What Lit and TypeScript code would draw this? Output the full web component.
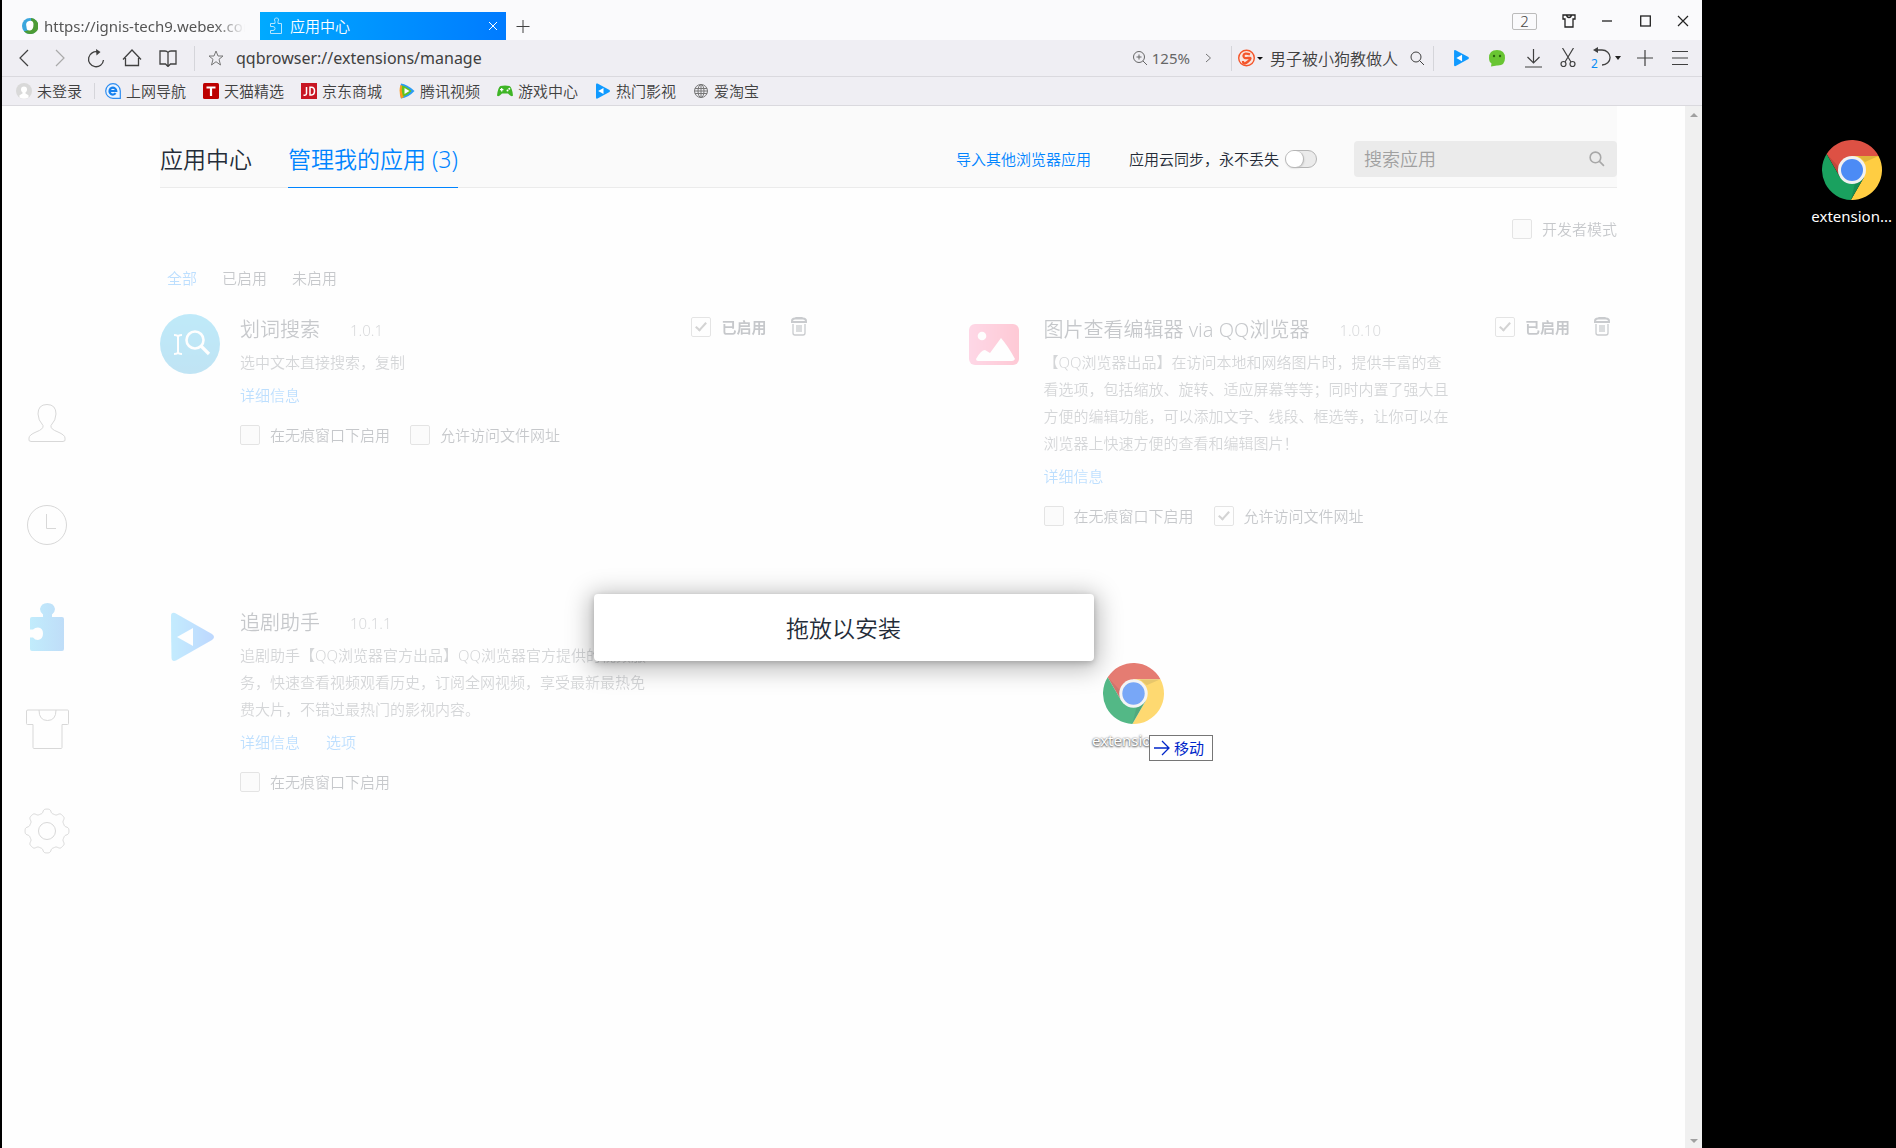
import { LitElement, html, css, svg, nothing } from "lit";
import { customElement, property } from "lit/decorators.js";

/* ---------- icons ---------- */

const chromeIcon = svg`
  <path fill="#dd5144" d="M4.61 14.02A30 30 0 0 1 56.53 16H30V30L17.88 37Z"/>
  <path fill="#ffcd42" d="M56.53 16A30 30 0 0 1 28.86 59.98L42.12 37 30 30V16Z"/>
  <path fill="#1aa15f" d="M28.86 59.98A30 30 0 0 1 4.61 14.02L17.88 37 30 30 42.12 37Z"/>
  <path fill="#000" opacity=".12" d="M36 16H56.53L43 22Z"/>
  <path fill="#000" opacity=".12" d="M4.61 14.02L17.88 37 17 27Z"/>
  <path fill="#000" opacity=".12" d="M28.86 59.98L42.12 37 33 43Z"/>
  <circle cx="30" cy="30" r="14" fill="#f1f1f1"/>
  <circle cx="30" cy="30" r="11" fill="#4c8bf5"/>`;

const gearPath = (() => {
  const points: string[] = [];
  for (let i = 0; i < 240; i++) {
    const a = (i / 240) * Math.PI * 2;
    const r = 20 + 2 * Math.tanh(2 * Math.cos(8 * a));
    points.push(`${(23 + r * Math.sin(a)).toFixed(2)} ${(23 - r * Math.cos(a)).toFixed(2)}`);
  }
  return `M${points.join("L")}Z`;
})();

const searchIcon = svg`<circle cx="7" cy="7" r="5" /><path d="M10.5 10.5L15 15"/>`;
const shirtPath = "M3 1H42.500Q43.500 1 43.500 2V14.500Q43.500 15.500 42.500 15.500H37V38.500Q37 39.500 36 39.500H9Q8 39.500 8 38.500V15.500H2.500Q1.500 15.500 1.500 14.500V2Q1.500 1 3 1";

const playIcon = svg`<path fill="#109aff" d="M1 1.500Q1 0 2.500.6L14.500 7Q15.500 8 14.500 9L2.500 15.600Q1 16 1 14.500Z"/><path fill="#fff" d="M3.200 8L8.500 5V11Z"/>`;

const trashIcon = svg`
  <path d="M2 5Q2 2.500 5 2.500H13Q16 2.500 16 5V6H2ZM6 2.500Q6 1 9 1T12 2.500" fill="none" stroke="#2f3742" stroke-width="2"/>
  <path d="M3 8V17Q3 19 5 19H13Q15 19 15 17V8M7 9V16M9 9V16M11 9V16" fill="none" stroke="#2f3742" stroke-width="1.300"/>`;

const bookmarkIcons: Record<string, unknown> = {
  login: svg`<circle cx="8" cy="8" r="8" fill="#d9d9d9"/><circle cx="8" cy="6.500" r="3" fill="#fff"/><path fill="#fff" d="M6.500 8H9.500V10.500L12.500 12.200V14.500Q8 17 3.500 14.500V12.200L6.500 10.500Z"/>`,
  e: svg`<path d="M8 .7A7.300 7.300 0 0 0 8 15.300H15.300V8A7.300 7.300 0 0 0 8 .7Z" fill="#e8f3ff" stroke="#2d8cf0" stroke-width="1.200"/><path d="M4.500 8H11.300A3.400 3.400 0 1 0 10.600 10.200" fill="none" stroke="#1580ee" stroke-width="2.200"/>`,
  t: svg`<rect width="16" height="16" rx="1.500" fill="#bd0000"/><path d="M3.500 4.500H12.500M8 4.500V13" stroke="#fff" stroke-width="2.200"/>`,
  jd: svg`<rect width="16" height="16" fill="#c81623"/><path d="M5.500 4V10.500Q5.500 12.200 3.800 12.200H2.500M9 4.200H10.500Q13.500 4.200 13.500 8T10.500 12H9Z" fill="none" stroke="#fff" stroke-width="1.500"/>`,
  tencent: svg`<path d="M2 .5Q8 1 15.500 8 9 15 2 15.500 0 8 2 .5Z" fill="#2a9cf5"/><path d="M1.500 2Q-.5 8 2 15.500L5 14 4 3Z" fill="#ff9a1a"/><path d="M3 2.500Q8 3.500 12.500 8 8 12.500 4 13.500 2 8 3 2.500Z" fill="#63c31e"/><path d="M5.500 5L10.500 8 5.500 11Z" fill="#fff"/>`,
  game: svg`<path d="M3.500 3Q8 2 12.500 3 15 4 16 12.500 14.500 14.500 11 10.500H5Q1.500 14.500 0 12.500 1 4 3.500 3Z" fill="#3fb526"/><path d="M3 6.700H6.400M4.700 5V8.400" stroke="#fff" stroke-width="1.200"/><circle cx="10.500" cy="7.500" r="1" fill="#fff"/><circle cx="12.300" cy="5.700" r="1" fill="#fff"/>`,
  play: playIcon,
  globe: svg`<g fill="none" stroke="#777" stroke-width="1"><circle cx="8" cy="8" r="6.500"/><ellipse cx="8" cy="8" rx="3" ry="6.500"/><path d="M8 1.500V14.500M2 5.500H14M2 10.500H14M1.500 8H14.500"/></g>`,
};

const appIcons: Record<string, unknown> = {
  word: svg`
    <defs><linearGradient id="word" x2="0" y2="1"><stop stop-color="#06b0ec"/><stop offset="1" stop-color="#0a98d8"/></linearGradient></defs>
    <circle cx="30" cy="30" r="30" fill="url(#word)"/>
    <path d="M14 21Q18 21 18 23 18 21 22 21M14 40Q18 40 18 38 18 40 22 40M18 22V39" fill="none" stroke="#fff" stroke-width="2"/>
    <circle cx="35" cy="26" r="8.500" fill="none" stroke="#fff" stroke-width="2.600"/><path d="M41 32L49 40" stroke="#fff" stroke-width="3.200"/>`,
  image: svg`
    <defs><linearGradient id="image"><stop stop-color="#ff68a2"/><stop offset="1" stop-color="#ff305f"/></linearGradient></defs>
    <rect x="5" y="10" width="50" height="41" rx="6" fill="url(#image)"/><circle cx="18" cy="22" r="4.300" fill="#fff"/>
    <path fill="#fff" d="M12 45Q17 36 21 36L26 39 37 24Q44 32 51 45 50 47 48 47H14Q12 47 12 45Z"/>`,
  play: svg`
    <defs><linearGradient id="play"><stop stop-color="#1ab8ff"/><stop offset="1" stop-color="#0068ff"/></linearGradient></defs>
    <path fill="url(#play)" d="M11 9Q11 5 15 6L52 27Q56 30 52 33L16 53.500Q12 55 11.500 51Q11 30 11 9Z"/><path fill="#fff" d="M17 30L33 21V39Z"/>`,
};

/* ---------- data ---------- */

interface AppItem {
  id: string;
  icon: string;
  name: string;
  version: string;
  text: string;
  links: string[];
  options: { label: string; on: boolean }[];
  manage: boolean;
}

const apps: AppItem[] = [
  {
    id: "word", icon: "word", name: "划词搜索", version: "1.0.1", text: "选中文本直接搜索，复制", links: ["详细信息"], manage: true,
    options: [{ label: "在无痕窗口下启用", on: false }, { label: "允许访问文件网址", on: false }],
  },
  {
    id: "image", icon: "image", name: "图片查看编辑器 via QQ浏览器", version: "1.0.10",
    text: "【QQ浏览器出品】在访问本地和网络图片时，提供丰富的查看选项，包括缩放、旋转、适应屏幕等等；同时内置了强大且方便的编辑功能，可以添加文字、线段、框选等，让你可以在浏览器上快速方便的查看和编辑图片！",
    links: ["详细信息"], manage: true,
    options: [{ label: "在无痕窗口下启用", on: false }, { label: "允许访问文件网址", on: true }],
  },
  {
    id: "series", icon: "play", name: "追剧助手", version: "10.1.1",
    text: "追剧助手【QQ浏览器官方出品】QQ浏览器官方提供的视频服务，快速查看视频观看历史，订阅全网视频，享受最新最热免费大片，不错过最热门的影视内容。",
    links: ["详细信息", "选项"], manage: false,
    options: [{ label: "在无痕窗口下启用", on: false }],
  },
];

const bookmarks = [
  ["e", "上网导航"], ["t", "天猫精选"], ["jd", "京东商城"], ["tencent", "腾讯视频"],
  ["game", "游戏中心"], ["play", "热门影视"], ["globe", "爱淘宝"],
];

const base = css`
  *, *::before, *::after { box-sizing: border-box; }
  button, input { font: inherit; color: inherit; border: 0; padding: 0; margin: 0; background: none; outline: none; }
  button { display: flex; align-items: center; justify-content: center; flex: none; }
  a { text-decoration: none; color: inherit; }
  svg { display: block; flex: none; }
  .line { fill: none; stroke: currentColor; }
  .check { appearance: none; flex: none; width: 20px; height: 20px; display: grid; place-items: center; border: 1px solid #999; border-radius: 2px; background: #f4f4f4; }
  .check:checked { background: #fff; }
  .check:checked::after { content: ""; width: 6px; height: 11px; margin-bottom: 3px; border: solid #555; border-width: 0 2px 2px 0; transform: rotate(42deg); }
  .option { display: flex; align-items: center; gap: 10px; }
`;

/* ---------- browser frame ---------- */

@customElement("browser-bar")
export class BrowserBar extends LitElement {
  static styles = [base, css`
    :host { display: block; color: #404040; font-size: 15px; line-height: 20px; }
    .tabs { display: flex; height: 40px; background: #fafafc; }
    .tab { align-self: flex-end; display: flex; align-items: center; height: 28px; }
    .plain { width: 258px; padding: 0 15px 0 20px; gap: 6px; color: #555; font-weight: 400; }
    .fade { flex: 1; overflow: hidden; white-space: nowrap; mask-image: linear-gradient(to right, #000 85%, transparent); }
    .active { width: 246px; padding: 0 5px 0 9px; gap: 7px; color: #fff; background: linear-gradient(to right, #00aaff, #007bff); }
    .grow { flex: 1; }
    .close { width: 16px; height: 16px; }
    .new { align-self: flex-end; width: 34px; height: 28px; }
    .wins { display: flex; align-items: center; height: 42px; color: #222; }
    .count { width: 25px; height: 17px; margin-right: 13px; border: 1px solid #bbb; border-radius: 2px; line-height: 16px; color: #444; }
    .win { width: 38px; height: 30px; }
    .nav { display: flex; align-items: center; height: 37px; padding: 0 4px; background: #efeef3; border-bottom: 1px solid #dad9de; }
    .ib { width: 36px; height: 30px; }
    .slim { width: 34px; }
    .undo { width: 43px; gap: 4px; }
    .dim { color: #aaa; }
    .sep { flex: none; width: 1px; height: 25px; background: #d5d5da; }
    .s1 { margin: 0 4px 0 8px; }
    .s2 { margin: 0 6px 0 5px; }
    .s3 { margin-right: 9px; }
    .url { flex: 1; min-width: 0; margin-left: 3px; font-size: 16px; font-weight: 400; height: 28px; }
    .zoom { gap: 4px; color: #666; font-weight: 400; }
    .hot { width: 131px; height: 28px; margin-left: 6px; font-size: 16px; }
    .find { width: 32px; }
    .marks { display: flex; align-items: center; height: 29px; padding: 0 14px; background: #efeef3; border-bottom: 1px solid #dad9de; }
    .mark { display: flex; align-items: center; gap: 5px; margin-right: 17px; white-space: nowrap; }
    .login { margin-right: 12px; }
    .s4 { height: 16px; margin-right: 10px; }
  `];

  render() {
    return html`
      <div class="tabs">
        <div class="tab plain">
          <svg width="16" height="16" viewBox="0 0 16 16"><circle cx="8" cy="8" r="8" fill="#3aa6dd"/><path d="M9 0A8 8 0 0 1 8 16Q4 16 2 13 10 14 9 0Z" fill="#4c9b35"/><path d="M4.500 9Q3 4 7 3T11.500 6Q11.500 12 8 12.500T4.500 9Z" fill="#fff"/></svg>
          <span class="fade">https://ignis-tech9.webex.com</span>
        </div>
        <div class="tab active">
          <svg class="line" opacity=".7" width="14" height="18" viewBox="0 0 14 18"><path d="M1.500 6.500H6V4.500Q4.500 1 7.500 1T9 4.500V6.500H12.500V16.500H1.500V13.500H4Q6 13.500 6 11.500T4 9.500H1.500Z"/></svg>
          <span class="grow">应用中心</span>
          <button class="close" aria-label="关闭标签"><svg class="line" width="10" height="10"><path d="M1 1L9 9M9 1L1 9"/></svg></button>
        </div>
        <button class="new" aria-label="新标签"><svg class="line" width="14" height="14"><path d="M.5 7.500H13.500M7 1V14"/></svg></button>
        <span class="grow"></span>
        <div class="wins">
          <button class="count">2</button>
          <button class="win" aria-label="皮肤"><svg class="line" width="14" height="14" viewBox="0 0 14 14"><path d="M1 1H13V5H11V13H3V5H1ZM4.500 1Q5 3.500 7 3.500T9.500 1" stroke-width="1.300"/></svg></button>
          <button class="win" aria-label="最小化"><svg class="line" width="10" height="2"><path d="M0 1H10" stroke-width="1.300"/></svg></button>
          <button class="win" aria-label="最大化"><svg class="line" width="11" height="12"><rect x=".7" y="1" width="9.600" height="10" stroke-width="1.300"/></svg></button>
          <button class="win" aria-label="关闭"><svg class="line" width="12" height="12"><path d="M1 1L11 11M11 1L1 11" stroke-width="1.200"/></svg></button>
        </div>
      </div>
      <div class="nav">
        <button class="ib" aria-label="后退"><svg class="line" width="12" height="18"><path d="M10 1L2 9 10 17" stroke-width="1.200"/></svg></button>
        <button class="ib dim" aria-label="前进"><svg class="line" width="12" height="18"><path d="M2 1L10 9 2 17" stroke-width="1.200"/></svg></button>
        <button class="ib" aria-label="刷新"><svg class="line" width="18" height="19" viewBox="0 0 18 19"><path d="M11 3A7.500 7.500 0 1 0 16.500 11" stroke-width="1.300"/><path d="M9 0L13.500 3 9.500 6.500Z" fill="currentColor" stroke="none"/></svg></button>
        <button class="ib" aria-label="主页"><svg class="line" width="20" height="18" viewBox="0 0 20 18"><path d="M1 10.500L10 1 19 10.500M3.500 9V16.500H16.500V9" stroke-width="1.300"/></svg></button>
        <button class="ib" aria-label="收藏夹"><svg class="line" width="18" height="17" viewBox="0 0 18 17"><path d="M9 2.500Q8 1 6 1H1V14H6.500L9 16.500 11.500 14H17V1H12Q10 1 9 2.500V16" stroke-width="1.300"/></svg></button>
        <span class="sep s1"></span>
        <button class="ib slim" aria-label="加入收藏"><svg class="line" width="16" height="16" viewBox="0 0 16 16"><path d="M8 1L10 6H15L11 9.300 12.500 15 8 11.700 3.500 15 5 9.300 1 6H6Z" stroke="#777"/></svg></button>
        <input class="url" aria-label="地址" value="qqbrowser://extensions/manage">
        <button class="zoom"><svg class="line" width="16" height="16" viewBox="0 0 16 16"><circle cx="7" cy="7" r="5.500"/><path d="M11 11L15 15M4.500 7H9.500M7 4.500V9.500"/></svg>125%</button>
        <button class="ib" aria-label="展开"><svg class="line" width="8" height="10" opacity=".7"><path d="M2 1L6.500 5 2 9"/></svg></button>
        <span class="sep s2"></span>
        <button aria-label="搜索引擎"><svg width="26" height="18" viewBox="0 0 26 18"><circle cx="8.500" cy="9" r="7.800" fill="#f9e5df" stroke="#f4552a" stroke-width="1.400"/><path d="M12 5.300Q6 3.300 5.500 6.500T10 9 10 12.500 5 12" fill="none" stroke="#f4552a" stroke-width="2.300"/><path d="M19 8H25L22 11Z" fill="#111"/></svg></button>
        <input class="hot" aria-label="搜索" value="男子被小狗教做人">
        <button class="ib find" aria-label="搜索"><svg class="line" width="16" height="16">${searchIcon}</svg></button>
        <span class="sep s3"></span>
        <button class="ib" aria-label="热门影视"><svg width="17" height="18" viewBox="0 0 16 16">${playIcon}</svg></button>
        <button class="ib" aria-label="微信"><svg width="18" height="18" viewBox="0 0 18 18"><path d="M9 1Q17 1 17 9T9 16.500L3 17.500 3.500 14.500Q1 13 1 9 1 1 9 1Z" fill="#69c533"/><circle cx="6" cy="7" r="1.200" fill="#2c6410"/><circle cx="12" cy="7" r="1.200" fill="#2c6410"/></svg></button>
        <button class="ib" aria-label="下载"><svg class="line" width="17" height="19"><path d="M8.500 0V14M2.500 8L8.500 14 14.500 8M0 18H17" stroke-width="1.200"/></svg></button>
        <button class="ib slim" aria-label="截图"><svg class="line" width="16" height="20" viewBox="0 0 16 20" stroke-width="1.200"><path d="M2.500 0L11 14M13.500 0L5 14"/><circle cx="3.500" cy="16" r="2.500"/><circle cx="12.500" cy="16" r="2.500"/></svg></button>
        <button class="ib undo" aria-label="恢复"><svg class="line" width="20" height="22" viewBox="0 0 20 22"><path d="M5 3H11A7 6.500 0 0 1 11 18" stroke-width="1.300"/><path d="M7 0V6L2 3Z" fill="currentColor" stroke="none"/><text x="0" y="21" fill="#0a8cf5" stroke="none" font-size="12" font-weight="400">2</text></svg><svg width="7" height="4"><path d="M0 0H6L3 4Z" fill="#222"/></svg></button>
        <button class="ib slim" aria-label="添加"><svg class="line" width="16" height="16"><path d="M0 8H16M8 0V16" stroke-width="1.200"/></svg></button>
        <button class="ib" aria-label="菜单"><svg class="line" width="16" height="16"><path d="M0 1.500H16M0 8H16M0 14.500H16" stroke-width="1.200"/></svg></button>
      </div>
      <div class="marks">
        <a class="mark login" href="#"><svg width="16" height="16" viewBox="0 0 16 16">${bookmarkIcons.login}</svg>未登录</a>
        <span class="sep s4"></span>
        ${bookmarks.map(([icon, label]) => html`<a class="mark" href="#"><svg width="16" height="16" viewBox="0 0 16 16">${bookmarkIcons[icon]}</svg>${label}</a>`)}
      </div>
    `;
  }
}

/* ---------- one installed app ---------- */

@customElement("app-card")
export class AppCard extends LitElement {
  @property({ attribute: false }) item!: AppItem;

  static styles = [base, css`
    :host { display: flex; gap: 20px; font-size: 15px; line-height: 20px; color: #242c38; }
    .body { flex: 1; min-width: 0; }
    .head { display: flex; align-items: center; height: 32px; }
    .name { margin: 0; font-size: 20px; font-weight: inherit; line-height: 32px; }
    .version { margin-left: 30px; color: #666b73; }
    .manage { display: flex; align-items: flex-start; align-self: flex-start; gap: 23px; margin: 3px 6px 0 auto; font-weight: 700; }
    .text { width: 408px; margin: 3px 0 9px; line-height: 27px; color: #5c6169; }
    .links { display: flex; gap: 26px; color: #0084ff; }
    .options { display: flex; gap: 20px; margin-top: 20px; }
  `];

  render() {
    const { icon, name, version, text, links, options, manage } = this.item;
    return html`
      <svg width="60" height="60" viewBox="0 0 60 60">${appIcons[icon]}</svg>
      <div class="body">
        <div class="head">
          <h2 class="name">${name}</h2><span class="version">${version}</span>
          ${manage ? html`<div class="manage">
            <label class="option"><input class="check" type="checkbox" checked>已启用</label>
            <button aria-label="删除"><svg width="18" height="20" viewBox="0 1 18 20">${trashIcon}</svg></button>
          </div>` : nothing}
        </div>
        <p class="text">${text}</p>
        <div class="links">${links.map((l) => html`<a href="#">${l}</a>`)}</div>
        <div class="options">
          ${options.map((o) => html`<label class="option"><input class="check" type="checkbox" ?checked=${o.on}>${o.label}</label>`)}
        </div>
      </div>
    `;
  }
}

/* ---------- whole screen ---------- */

@customElement("app-root")
export class AppRoot extends LitElement {
  static styles = [base, css`
    :host { display: flex; min-height: 100vh; background: #000; color: #242c38; font-family: "Noto Sans", "Noto Sans CJK SC", sans-serif; font-size: 15px; font-weight: 350; line-height: 20px; }
    .window { flex: 1; min-width: 0; display: flex; flex-direction: column; margin-left: 2px; background: #fefefe; }
    .view { flex: 1; display: flex; }
    .page { position: relative; flex: 1; min-width: 0; display: flex; }
    .side { flex: none; width: 90px; display: flex; flex-direction: column; justify-content: center; color: #d8d8d8; }
    .side-link { display: flex; align-items: center; justify-content: center; height: 102px; }
    .main { flex: 1; min-width: 0; padding: 0 68px; }
    .top { display: flex; align-items: center; height: 82px; padding-top: 24px; background: #fafafa; border-bottom: 1px solid #ebebeb; }
    .top-tab { height: 58px; margin: 0 36px -1px 0; font-size: 23px; line-height: 58px; white-space: nowrap; }
    .current { color: #0084ff; border-bottom: 1px solid #0084ff; }
    .tools { display: flex; align-items: center; margin-left: auto; }
    .import { color: #0084ff; margin-right: 38px; }
    .sync { display: flex; align-items: center; gap: 6px; margin-right: 37px; }
    .switch { appearance: none; width: 32px; height: 18px; border: 1px solid #b5b5b5; border-radius: 9px; background: #ebebeb; }
    .switch::after { content: ""; display: block; width: 18px; height: 16px; border-right: 1px solid #b5b5b5; border-radius: 8px; background: #fff; box-shadow: 0 1px 2px #bbb; }
    .search { display: flex; align-items: center; width: 263px; height: 36px; padding: 0 12px 0 10px; border-radius: 4px; background: #ebebeb; color: #a8a8a8; }
    .query { flex: 1; min-width: 0; height: 30px; font-size: 18px; }
    .query::placeholder { color: #a0a0a0; }
    .faded { opacity: .25; }
    .developer { display: flex; justify-content: flex-end; padding-top: 31px; }
    .filters { display: flex; gap: 25px; padding: 29px 7px 0; }
    .chosen { color: #0084ff; }
    .cards { display: grid; grid-template-columns: 1fr 1fr; column-gap: 150px; row-gap: 81px; margin-top: 26px; }
    .scroll { flex: none; width: 17px; display: flex; flex-direction: column; justify-content: space-between; align-items: center; padding: 7px 0 5px; background: #f0f0f0; }
    .drop { position: absolute; inset: 0; display: flex; align-items: center; justify-content: center; pointer-events: none; }
    .dialog { width: 500px; padding: 18px 0 17px; border-radius: 4px; background: #fff; box-shadow: 0 4px 23px 5px rgba(0, 0, 0, .26), 0 2px 6px rgba(0, 0, 0, .2); font-size: 23px; line-height: 32px; text-align: center; }
    .ghost { position: absolute; left: 1090px; top: 557px; }
    .ghost-icon { margin-left: 11px; opacity: .75; }
    .ghost-name { display: block; margin-top: 6px; font-weight: 400; color: #fff; text-shadow: 0 1px 2px #555, 0 0 2px #777; }
    .tip { position: absolute; left: 57px; top: 72px; display: flex; align-items: center; gap: 4px; height: 26px; padding: 0 8px 1px 4px; border: 1px solid #767676; background: #fff; color: #0026c9; font-weight: 400; white-space: nowrap; }
    .desktop { flex: none; width: 194px; display: flex; justify-content: flex-end; padding: 140px 4px 0 0; color: #fff; font-weight: 400; }
    .file { display: flex; flex-direction: column; align-items: center; align-self: flex-start; gap: 6px; }
  `];

  render() {
    return html`
      <div class="window">
        <browser-bar></browser-bar>
        <div class="view">
          <div class="page">
            <nav class="side">
              <a class="side-link" href="#" aria-label="我的"><svg class="line" width="40" height="40" viewBox="0 0 40 40"><path d="M16 22.500Q11 17 11 11Q11 1.500 20 1.500T29 11Q29 17 24 22.500Q23 26 31 29 38 32 38 35Q39 38.500 36 38.500H4Q1 38.500 2 35 2 32 9 29 17 26 16 22.500Z"/></svg></a>
              <a class="side-link" href="#" aria-label="历史"><svg class="line" width="42" height="42"><circle cx="21" cy="21" r="19.500"/><path d="M20.500 10V24.500H30"/></svg></a>
              <a class="side-link" href="#" aria-label="应用"><svg width="34" height="48" viewBox="0 0 34 48"><defs><linearGradient id="g"><stop stop-color="#c1ecfc"/><stop offset="1" stop-color="#bfddf8"/></linearGradient></defs><path fill="url(#g)" d="M2 14H13V11.500Q10 9 10 6 11 0 17.500 0T25 6Q25 9 22 11.500V14H32Q34 14 34 16V46Q34 48 32 48H2Q0 48 0 46V34.500H3Q5 37 8 37Q13 36 13 30.500T8 24.500Q5 24.500 3 26.500H0V16Q0 14 2 14Z"/></svg></a>
              <a class="side-link" href="#" aria-label="皮肤"><svg class="line" width="45" height="40" viewBox="0 0 45 40"><path d="${shirtPath}M14 1Q14 11.500 22.500 11.500 31 11.500 31 1"/></svg></a>
              <a class="side-link" href="#" aria-label="设置"><svg class="line" width="46" height="46"><path d="${gearPath}"/><circle cx="23" cy="23" r="8.500"/></svg></a>
            </nav>
            <main class="main">
              <header class="top">
                <a class="top-tab" href="#">应用中心</a>
                <a class="top-tab current" href="#">管理我的应用 (3)</a>
                <div class="tools">
                  <a class="import" href="#">导入其他浏览器应用</a>
                  <label class="sync">应用云同步，永不丢失<input class="switch" type="checkbox" role="switch"></label>
                  <div class="search">
                    <input class="query" type="text" placeholder="搜索应用" aria-label="搜索应用">
                    <svg class="line" width="17" height="17" viewBox="0 0 16 16" stroke-width="1.500">${searchIcon}</svg>
                  </div>
                </div>
              </header>
              <div class="faded">
                <div class="developer"><label class="option"><input class="check" type="checkbox">开发者模式</label></div>
                <div class="filters"><a class="chosen" href="#">全部</a><a href="#">已启用</a><a href="#">未启用</a></div>
                <div class="cards">${apps.map((a) => html`<app-card .item=${a}></app-card>`)}</div>
              </div>
            </main>
            <div class="drop"><div class="dialog" role="dialog">拖放以安装</div></div>
            <div class="ghost">
              <svg class="ghost-icon" width="61" height="61" viewBox="0 0 60 60">${chromeIcon}</svg>
              <span class="ghost-name">extensio</span>
              <span class="tip"><svg class="line" width="16" height="16"><path d="M0 8H15M8 1L15 8 8 15" stroke-width="1.300"/></svg>移动</span>
            </div>
          </div>
          <div class="scroll">
            <svg width="8" height="4"><path d="M4 0L8 4H0Z" fill="#a0a0a0"/></svg>
            <svg width="8" height="4"><path d="M0 0H8L4 4Z" fill="#a0a0a0"/></svg>
          </div>
        </div>
      </div>
      <div class="desktop">
        <div class="file"><svg width="60" height="60" viewBox="0 0 60 60">${chromeIcon}</svg><span>extension...</span></div>
      </div>
    `;
  }
}
